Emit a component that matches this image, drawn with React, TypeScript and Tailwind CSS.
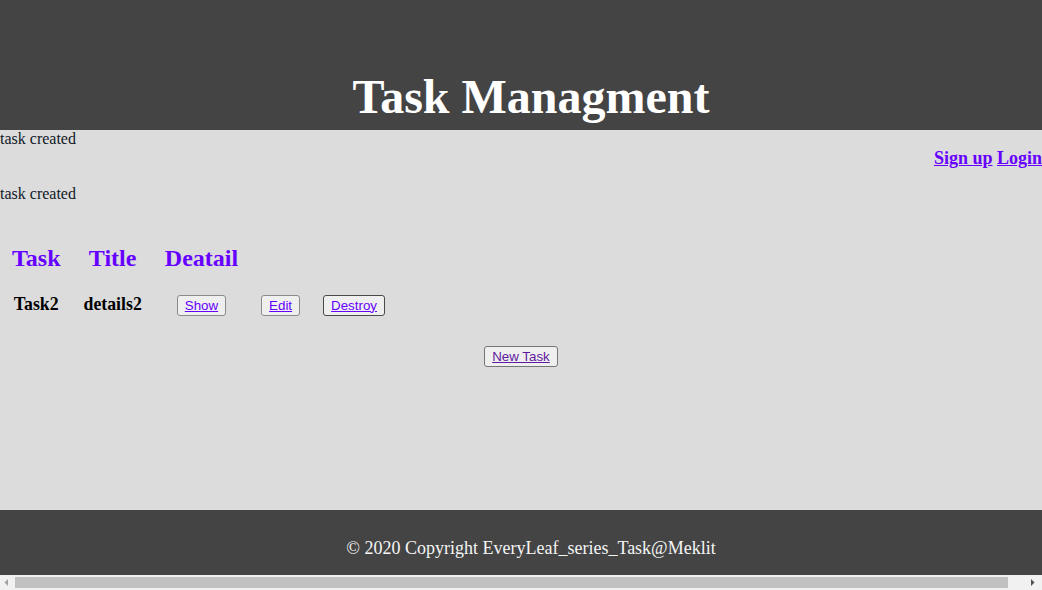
import React from 'react'

const serif = { fontFamily: '"Liberation Serif", "Times New Roman", serif' }
const sans = { fontFamily: '"Liberation Sans", Arial, sans-serif' }

function Btn({ label, dark }: { label: string; dark?: boolean }) {
  return (
    <span
      className={`inline-block align-middle rounded-[3px] border bg-[#efefef] px-[7px] py-[2px] text-[13.33px] leading-[15px] text-[#6600ff] underline ${
        dark ? 'border-[#4a4a4a]' : 'border-[#8a8a8a]'
      }`}
      style={sans}
    >
      {label}
    </span>
  )
}

export default function App() {
  return (
    <div className="flex h-[590px] w-[1042px] flex-col overflow-hidden text-black" style={serif}>
      <header className="flex h-[130px] flex-col justify-end bg-[#444444] pb-[6px] pl-[20px]">
        <h1 className="text-center text-[48px] font-bold leading-[55px] text-white">Task Managment</h1>
      </header>

      <main className="flex-1 bg-[#dcdcdc]">
        <p className="text-[16px] leading-[18.4px] text-[#111827]">task created</p>
        <nav className="text-right text-[18px] font-bold leading-[21px] text-[#6600ff]">
          <a className="underline">Sign up</a> <a className="underline">Login</a>
        </nav>
        <p className="mt-[16px] text-[16px] leading-[18.4px] text-[#111827]">task created</p>

        <table className="-ml-[1px] mt-[29px] border-separate border-spacing-x-[3px] border-spacing-y-[2px]">
          <thead>
            <tr>
              <th className="p-[10px] text-center text-[24px] font-bold leading-[26px] text-[#6600ff]">Task</th>
              <th className="p-[10px] text-center text-[24px] font-bold leading-[26px] text-[#6600ff]">Title</th>
              <th className="p-[10px] text-center text-[24px] font-bold leading-[26px] text-[#6600ff]">Deatail</th>
            </tr>
          </thead>
          <tbody>
            <tr>
              <td className="p-[10px] text-center align-middle text-[17.8px] font-bold leading-[21px]">Task2</td>
              <td className="p-[10px] text-center align-middle text-[17.8px] font-bold leading-[21px]">details2</td>
              <td className="p-[10px] text-center align-middle leading-[21px]"><Btn label="Show" /></td>
              <td className="p-[10px] text-center align-middle leading-[21px]"><Btn label="Edit" /></td>
              <td className="p-[10px] text-center align-middle leading-[21px]"><Btn label="Destroy" dark /></td>
            </tr>
          </tbody>
        </table>

        <div className="mt-[18px] flex justify-center">
          <span
            className="inline-block rounded-[3px] border border-[#767676] bg-[#efefef] px-[7px] py-[2px] text-[13.33px] leading-[15px] text-[#5f1aa0] underline"
            style={sans}
          >
            New Task
          </span>
        </div>
      </main>

      <footer className="h-[65px] bg-[#444444] pl-[20px] pt-[28px] text-center text-[18px] leading-[21px] text-[#f5f5f5]">
        © 2020 Copyright EveryLeaf_series_Task@Meklit
      </footer>

      {/* horizontal scrollbar as in the screenshot */}
      <div className="flex h-[15px] items-center bg-[#f1f1f1]">
        <svg width="15" height="15" viewBox="0 0 15 15" className="shrink-0">
          <path d="M8 4 L8 11 L4.5 7.5 Z" fill="#a3a3a3" />
        </svg>
        <div className="h-[11px] w-[993px] bg-[#c1c1c1]" />
        <div className="flex-1" />
        <svg width="15" height="15" viewBox="0 0 15 15" className="mr-[4px] shrink-0">
          <path d="M8 4 L8 11 L11.5 7.5 Z" fill="#505050" />
        </svg>
      </div>
    </div>
  )
}
